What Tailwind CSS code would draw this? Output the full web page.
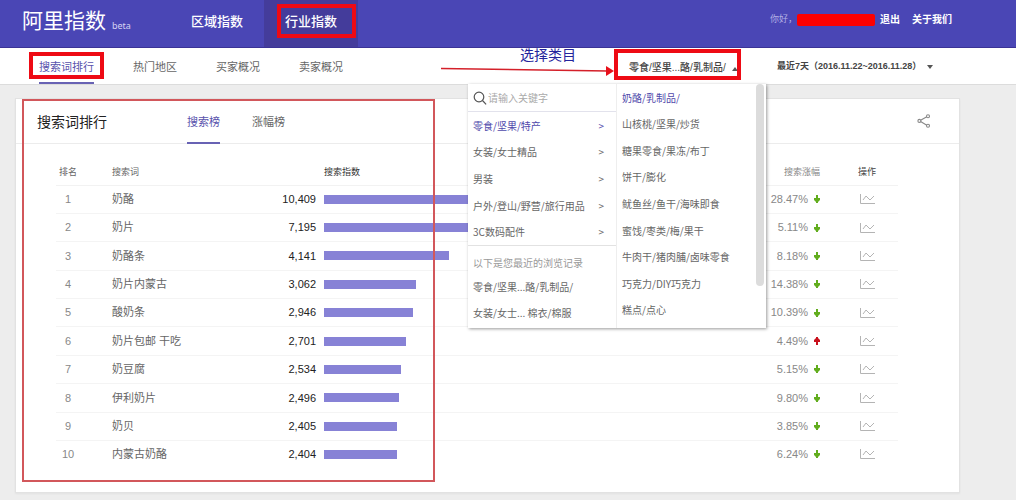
<!DOCTYPE html>
<html lang="zh-CN">
<head>
<meta charset="utf-8">
<meta name="viewport" content="width=device-width, initial-scale=1">
<title>阿里指数</title>
<script src="https://cdn.jsdelivr.net/npm/@tailwindcss/browser@4"></script>
</head>
<body class="min-h-screen bg-[#ededed] font-['Liberation_Sans','Noto_Sans_CJK_SC',sans-serif] text-[11px] text-[#666]">

<header class="flex h-12 items-stretch border-b border-[#3b3396] bg-[#4a46b5] text-white">
  <a href="#" class="flex w-[170px] shrink-0 items-start pl-[22px]">
    <span class="mt-[6px] text-[21px] leading-[30px]">阿里指数</span>
    <span class="mt-5 ml-[6px] font-['Noto_Sans',sans-serif] text-[9px] leading-3 text-[#d5d3f2]">beta</span>
  </a>
  <nav class="flex text-[13px] font-medium">
    <a href="#" class="flex w-[94px] items-center justify-center pb-1">区域指数</a>
    <a href="#" class="relative flex w-[94px] items-center justify-center bg-[#443c9b] pb-1">行业指数
      <span class="absolute top-[4px] left-[13px] h-[34px] w-[79px] border-4 border-[#ee0a14]"></span>
    </a>
  </nav>
  <div class="ml-auto flex items-center pr-16 pb-2 text-[10px] font-bold">
    <span class="text-[9px] font-normal text-[#b3b0e4]">你好，</span>
    <span class="h-3 w-[78px] rounded-xs bg-[#fe0000]"></span>
    <a href="#" class="ml-[5px]">退出</a>
    <a href="#" class="ml-3">关于我们</a>
  </div>
</header>

<div class="relative z-10 flex h-[37px] border-b border-[#dcdcdc] bg-white">
  <nav class="flex gap-[39px] pl-[39px]">
    <a href="#" class="relative flex items-center border-b-2 border-[#6862b4] pt-[4px] text-[#5852ac]">搜索词排行
      <span class="absolute top-[4px] -left-[10px] h-[27px] w-[75px] border-4 border-[#ee0a14]"></span>
    </a>
    <a href="#" class="flex items-center border-b-2 border-transparent pt-[4px]">热门地区</a>
    <a href="#" class="flex items-center border-b-2 border-transparent pt-[4px]">买家概况</a>
    <a href="#" class="flex items-center border-b-2 border-transparent pt-[4px]">卖家概况</a>
  </nav>

  <div class="relative ml-auto w-[149px] shrink-0">
    <button type="button" class="flex h-full w-full items-center pt-[2px] pl-3 text-[10px] font-medium text-[#444]">零食/坚果...酪/乳制品/
      <svg class="mt-1 ml-[6px] h-[4px] w-[6px]" viewBox="0 0 6 4"><path d="M3 0 6 4H0z" fill="#555"/></svg>
    </button>
    <!-- annotation: pick a category -->
    <span class="absolute top-[1px] -left-[3px] h-[31px] w-[127px] border-4 border-[#ee0a14]"></span>
    <span class="absolute -top-[3px] right-[190px] text-[14px] leading-5 whitespace-nowrap text-[#24249c]">选择类目</span>
    <svg class="absolute top-[14px] right-[152px] h-[14px] w-[174px]" viewBox="0 0 174 14"><path d="M1 6.5 168 9" stroke="#d4202a" stroke-width="1.4"/><path d="M166 4 174 9 166 14z" fill="#e8101a"/></svg>

    <div class="absolute top-full right-0 flex w-[298px] bg-white text-[10px] shadow-[1px_1px_3px_rgba(0,0,0,0.4)] font-['Noto_Sans_CJK_SC',sans-serif]">
      <div class="w-[149px] border-r border-[#eee] pb-[2px]">
        <label class="flex h-7 items-center border-b border-[#e2e2ec] pl-[5px]">
          <svg class="h-[14px] w-[14px] shrink-0" viewBox="0 0 14 14" fill="none" stroke="#555" stroke-width="1.2"><circle cx="6" cy="6" r="4.8"/><path d="m9.5 9.5 3.6 3.8"/></svg>
          <input type="text" aria-label="关键字" placeholder="请输入关键字" class="ml-px w-full min-w-0 text-[10px] outline-none placeholder:text-[#aaa]">
        </label>
        <ul class="flex h-[134px] flex-col border-b border-[#e2e2e2] pr-3 pl-[5px]">
          <li class="flex flex-1 text-[#4f49ab]"><a href="#" class="flex flex-1 items-center justify-between">零食/坚果/特产<span>&gt;</span></a></li>
          <li class="flex flex-1"><a href="#" class="flex flex-1 items-center justify-between">女装/女士精品<span>&gt;</span></a></li>
          <li class="flex flex-1"><a href="#" class="flex flex-1 items-center justify-between">男装<span>&gt;</span></a></li>
          <li class="flex flex-1"><a href="#" class="flex flex-1 items-center justify-between">户外/登山/野营/旅行用品<span>&gt;</span></a></li>
          <li class="flex flex-1"><a href="#" class="flex flex-1 items-center justify-between">3C数码配件<span>&gt;</span></a></li>
        </ul>
        <p class="mt-1 flex h-6 items-center pl-[5px] text-[#999]">以下是您最近的浏览记录</p>
        <a href="#" class="flex h-6 items-center pl-[5px]">零食/坚果...酪/乳制品/</a>
        <a href="#" class="flex h-7 items-center pl-[5px]">女装/女士... 棉衣/棉服</a>
      </div>
      <div class="flex flex-1 justify-between">
        <ul class="flex h-[239px] flex-col pl-[5px]">
          <li class="flex flex-1 items-center text-[#4f49ab]"><a href="#">奶酪/乳制品/</a></li>
          <li class="flex flex-1 items-center"><a href="#">山核桃/坚果/炒货</a></li>
          <li class="flex flex-1 items-center"><a href="#">糖果零食/果冻/布丁</a></li>
          <li class="flex flex-1 items-center"><a href="#">饼干/膨化</a></li>
          <li class="flex flex-1 items-center"><a href="#">鱿鱼丝/鱼干/海味即食</a></li>
          <li class="flex flex-1 items-center"><a href="#">蜜饯/枣类/梅/果干</a></li>
          <li class="flex flex-1 items-center"><a href="#">牛肉干/猪肉脯/卤味零食</a></li>
          <li class="flex flex-1 items-center"><a href="#">巧克力/DIY巧克力</a></li>
          <li class="flex flex-1 items-center"><a href="#">糕点/点心</a></li>
        </ul>
        <span class="mr-[2px] h-[202px] w-2 rounded-full bg-[#dcdcdc]"></span>
      </div>
    </div>
  </div>

  <button type="button" class="flex w-[250px] shrink-0 items-center gap-[6px] pt-[2px] pl-[11px] text-[9px] font-bold text-[#444]">最近7天（2016.11.22~2016.11.28）
    <svg class="h-[4px] w-[6px]" viewBox="0 0 6 4"><path d="M0 0H6L3 4z" fill="#555"/></svg>
  </button>
</div>

<main class="relative mt-[13px] mr-14 ml-[15px] border border-[#e2e2e2] bg-white pb-6 shadow-xs">
  <div class="flex h-[45px] items-stretch border-b border-[#ececec] pl-[21px]">
    <h1 class="flex w-[150px] items-center pt-[2px] text-[14px] text-[#222]">搜索词排行</h1>
    <a href="#" class="-mb-px flex items-center border-b-2 border-[#6862b4] pt-[4px] text-[#5852ac]">搜索榜</a>
    <a href="#" class="-mb-px ml-8 flex items-center border-b-2 border-transparent pt-[4px]">涨幅榜</a>
    <button type="button" aria-label="分享" class="mr-7 ml-auto">
      <svg class="h-[14px] w-[14px]" viewBox="0 0 14 14" fill="none" stroke="#888" stroke-width="1.1"><path d="M3.6 6.2 9.8 2.8M3.6 7.6l6.2 3.6"/><circle cx="2.4" cy="6.9" r="1.5"/><circle cx="11" cy="2.2" r="1.5"/><circle cx="11" cy="11.8" r="1.5"/></svg>
    </button>
  </div>

  <div class="pt-[17px] pr-[61px] pl-10">
    <table class="h-[307px] w-full table-fixed border-collapse">
      <colgroup><col class="w-6"><col class="w-[176px]"><col class="w-[64px]"><col><col class="w-[90px]"><col class="w-[78px]"></colgroup>
      <thead>
        <tr class="h-6 border-b border-[#f2f2f2] text-[9px]">
          <th class="font-normal whitespace-nowrap">排名</th>
          <th class="pl-8 text-left font-normal">搜索词</th>
          <th></th>
          <th class="pl-1 text-left font-normal text-[#333]">搜索指数</th>
          <th class="text-right font-normal text-[#888]">搜索涨幅</th>
          <th class="pl-4 font-normal text-[#444]">操作</th>
        </tr>
      </thead>
      <tbody id="rows"></tbody>
    </table>
  </div>
  <!-- annotation: ranking area -->
  <span class="pointer-events-none absolute top-0 bottom-[10px] left-[6px] w-[413px] border-2 border-[#d2575b]"></span>
</main>

<script>
const data = [
  ['奶酪', 10409, '28.47%', -1], ['奶片', 7195, '5.11%', -1], ['奶酪条', 4141, '8.18%', -1],
  ['奶片内蒙古', 3062, '14.38%', -1], ['酸奶条', 2946, '10.39%', -1], ['奶片包邮 干吃', 2701, '4.49%', 1],
  ['奶豆腐', 2534, '5.15%', -1], ['伊利奶片', 2496, '9.80%', -1], ['奶贝', 2405, '3.85%', -1], ['内蒙古奶酪', 2404, '6.24%', -1]
];
const down = '<svg class="h-2 w-[6px]" viewBox="0 0 6 8" fill="#62ad1e"><path d="M2 0h2v3h2v2L4 7v1H2V7L0 5V3h2z"/></svg>';
const up = '<svg class="h-2 w-[6px]" viewBox="0 0 6 8" fill="#c8101c"><path d="M2 8h2V5h2V3L4 1V0H2v1L0 3v2h2z"/></svg>';
document.getElementById('rows').innerHTML = data.map(([word, n, pct, dir], i) => `
  <tr class="border-b border-[#f4f4f4] last:border-0">
    <td class="text-center text-[#888]">${i + 1}</td>
    <td class="pl-8 whitespace-nowrap">${word}</td>
    <td class="pr-1 text-right text-[#222]">${n.toLocaleString('en-US')}</td>
    <td class="pl-1"><div class="h-[9px] bg-[#8782d6]" style="width:${Math.round(n * 0.0302)}px"></div></td>
    <td class="text-[#888]"><div class="flex items-center justify-end gap-[6px]">${pct}${dir > 0 ? up : down}</div></td>
    <td class="pl-4"><button type="button" aria-label="趋势" class="mx-auto block"><svg class="h-[10px] w-[15px]" viewBox="0 0 15 10" fill="none" stroke="#b4b4b4"><path d="M.5 0v9.5H15"/><path d="m3 6 3-4 4 4 4-4"/></svg></button></td>
  </tr>`).join('');
</script>
</body>
</html>
